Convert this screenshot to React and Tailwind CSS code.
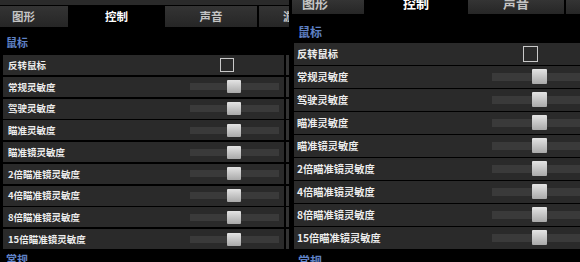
const rows = [
  '常规灵敏度',
  '驾驶灵敏度',
  '瞄准灵敏度',
  '瞄准镜灵敏度',
  '2倍瞄准镜灵敏度',
  '4倍瞄准镜灵敏度',
  '8倍瞄准镜灵敏度',
  '15倍瞄准镜灵敏度',
];

const font = { fontFamily: '"Noto Sans CJK SC", "Noto Sans", sans-serif' };

function LeftPanel() {
  return (
    <div className="w-[289px] h-[262px] shrink-0 overflow-hidden bg-black" style={font}>
      <div className="h-[5px] bg-[#2a2a2a]" />
      <div className="h-[1px] bg-black" />
      {/* tabs */}
      <div className="flex h-[21px] gap-[2px] whitespace-nowrap">
        <div className="w-[68px] shrink-0 bg-gradient-to-b from-[#343434] to-[#262626] pl-[12px] text-[11.5px] font-bold leading-[21px] text-[#c4c4c4]">图形</div>
        <div className="w-[93px] shrink-0 bg-black text-center text-[11.5px] font-bold leading-[21px] text-white">控制</div>
        <div className="w-[92px] shrink-0 bg-gradient-to-b from-[#343434] to-[#262626] text-center text-[11.5px] font-bold leading-[21px] text-[#c4c4c4]">声音</div>
        <div className="w-[92px] shrink-0 bg-gradient-to-b from-[#343434] to-[#262626] pl-[24px] text-[11.5px] font-bold leading-[21px] text-[#c4c4c4]">游戏</div>
      </div>
      <div className="flex h-[28px] items-center pl-[6px] pt-[3px] text-[11px] font-bold text-[#5f82c6]">鼠标</div>
      <div className="flex flex-col gap-[1.75px]">
        <div className="flex h-[20px] gap-[2px]">
          <div className="ml-[3px] flex w-[281px] shrink-0 items-center bg-[#2a2a2a] pl-[5px]">
            <span className="w-[182px] shrink-0 text-[9.5px] font-bold text-[#ececec]">反转鼠标</span>
            <div className="ml-[30px] h-[14px] w-[14px] border-[1.5px] border-[#c9c9c9]" />
          </div>
          <div className="w-[10px] shrink-0 bg-[#333333]" />
        </div>
        {rows.map((r) => (
          <div key={r} className="flex h-[20px] gap-[2px]">
            <div className="ml-[3px] flex w-[281px] shrink-0 items-center bg-[#2a2a2a] pl-[5px]">
              <span className="w-[182px] shrink-0 whitespace-nowrap text-[9.5px] font-bold text-[#ececec]">{r}</span>
              <div className="relative h-[7px] w-[89px] bg-[#3a3a3a]">
                <div className="absolute left-[37px] top-[-3px] h-[13px] w-[14px] rounded-[1px] bg-gradient-to-b from-[#e4e4e4] to-[#a9a9a9]" />
              </div>
            </div>
            <div className="w-[10px] shrink-0 bg-[#333333]" />
          </div>
        ))}
      </div>
      <div className="pl-[6px] pt-[2px] text-[11px] font-bold text-[#5f82c6]">常规</div>
    </div>
  );
}

function RightPanel() {
  return (
    <div className="flex h-[262px] w-[291px] shrink-0 overflow-hidden bg-black" style={font}>
      <div className="w-[3px] shrink-0 bg-black" />
      <div className="w-[288px] shrink-0">
        {/* tabs (top cut off) */}
        <div className="flex h-[14px] gap-[2px] overflow-hidden whitespace-nowrap">
          <div className="w-[72px] shrink-0 overflow-hidden bg-gradient-to-b from-[#343434] to-[#262626] pl-[10px] text-[13px] font-bold leading-[6px] text-[#c4c4c4]">图形</div>
          <div className="w-[100px] shrink-0 overflow-hidden bg-black text-center text-[13px] font-bold leading-[6px] text-white">控制</div>
          <div className="w-[96px] shrink-0 overflow-hidden bg-gradient-to-b from-[#343434] to-[#262626] text-center text-[13px] font-bold leading-[6px] text-[#c4c4c4]">声音</div>
          <div className="w-[40px] shrink-0 bg-gradient-to-b from-[#343434] to-[#262626]" />
        </div>
        <div className="flex h-[29px] items-center pl-[6px] pt-[7px] text-[12px] font-bold text-[#5f82c6]">鼠标</div>
        <div className="flex flex-col gap-[1.5px]">
          <div className="ml-[2px] flex h-[21.5px] items-center bg-[#2a2a2a] pl-[3px]">
            <span className="w-[195px] shrink-0 text-[10.25px] font-bold text-[#ececec]">反转鼠标</span>
            <div className="ml-[31px] h-[16px] w-[15px] border-[1.5px] border-[#c9c9c9]" />
          </div>
          {rows.map((r) => (
            <div key={r} className="ml-[2px] flex h-[21.5px] items-center bg-[#2a2a2a] pl-[3px]">
              <span className="w-[195px] shrink-0 whitespace-nowrap text-[10.25px] font-bold text-[#ececec]">{r}</span>
              <div className="relative h-[8px] flex-1 bg-[#3a3a3a]">
                <div className="absolute left-[40px] top-[-3.5px] h-[15px] w-[15px] rounded-[1px] bg-gradient-to-b from-[#e4e4e4] to-[#a9a9a9]" />
              </div>
            </div>
          ))}
        </div>
        <div className="pl-[6px] pt-[3px] text-[12px] font-bold text-[#5f82c6]">常规</div>
      </div>
    </div>
  );
}

export default function App() {
  return (
    <div className="flex h-[262px] w-[580px] overflow-hidden bg-black">
      <LeftPanel />
      <RightPanel />
    </div>
  );
}
